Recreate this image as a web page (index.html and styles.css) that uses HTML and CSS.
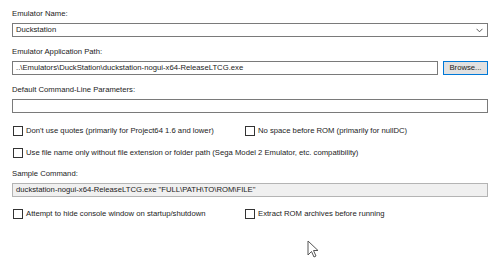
FILE: index.html
```html
<!DOCTYPE html>
<html lang="en">
<head>
  <meta charset="UTF-8">
  <title>Emulator Settings</title>
  <link rel="stylesheet" href="styles.css">
</head>
<body>

  <div class="form">
    <div class="label">Emulator Name:</div>
    <div class="field select">
      <span>Duckstation</span>
      <svg class="chevron" width="7" height="5" viewBox="0 0 7 5"><path d="M0.5 0.8 L3.5 3.8 L6.5 0.8" fill="none" stroke="#444" stroke-width="0.9"/></svg>
    </div>

    <div class="label">Emulator Application Path:</div>
    <div class="path-row">
      <div class="field grow">..\Emulators\DuckStation\duckstation-nogui-x64-ReleaseLTCG.exe</div>
      <button class="browse">Browse...</button>
    </div>

    <div class="label">Default Command-Line Parameters:</div>
    <div class="field"></div>

    <div class="checks first">
      <label class="check"><input type="checkbox"> Don't use quotes (primarily for Project64 1.6 and lower)</label>
      <label class="check"><input type="checkbox"> No space before ROM (primarily for nullDC)</label>
    </div>
    <div class="checks single">
      <label class="check"><input type="checkbox"> Use file name only without file extension or folder path (Sega Model 2 Emulator, etc. compatibility)</label>
    </div>

    <div class="label">Sample Command:</div>
    <div class="field readonly">duckstation-nogui-x64-ReleaseLTCG.exe "FULL\PATH\TO\ROM\FILE"</div>

    <div class="checks last">
      <label class="check"><input type="checkbox"> Attempt to hide console window on startup/shutdown</label>
      <label class="check"><input type="checkbox"> Extract ROM archives before running</label>
    </div>
  </div>

  <svg class="cursor" width="12" height="19" viewBox="0 0 12 19">
    <path d="M1 1 L1 15 L4.5 11.5 L7 17 L9 16 L6.5 10.5 L11 10.5 Z" fill="#fff" stroke="#555" stroke-width="1"/>
  </svg>

</body>
</html>
```

FILE: styles.css
```css
body {
  margin: 0;
  background: #fff;
  font-family: "Liberation Sans", Arial, sans-serif;
  font-size: 7.7px;
  color: #1b1b1b;
  position: relative;
  height: 265px;
  overflow: hidden;
}

.form {
  display: flex;
  flex-direction: column;
  padding: 9px 12px 0 12px;
}

.label {
  height: 10px;
  line-height: 10px;
  margin-bottom: 4px;
}

.field {
  box-sizing: border-box;
  height: 14px;
  border: 1px solid #7a7a7a;
  background: #fff;
  padding: 0 3px;
  line-height: 12px;
  margin-bottom: 10px;
  white-space: nowrap;
}

.select {
  display: flex;
  align-items: center;
  justify-content: space-between;
}

.chevron {
  margin-right: 1px;
}

.path-row {
  display: flex;
  gap: 5px;
}

.grow {
  flex: 1;
}

.browse {
  box-sizing: border-box;
  width: 45px;
  height: 14px;
  padding: 0;
  border: 1px solid #0078d7;
  background: #e1e1e1;
  font: inherit;
  color: #1b1b1b;
  line-height: 12px;
}

.readonly {
  background: #f0f0f0;
  border-color: #b4b4b4;
}

.checks {
  display: grid;
  grid-template-columns: 232px auto;
  height: 10px;
  margin-bottom: 12px;
  padding-left: 1px;
}

.checks.first {
  margin-top: 3px;
}

.checks.single {
  grid-template-columns: auto;
  margin-bottom: 11px;
}

.checks.last {
  margin-top: 2px;
}

.check {
  display: flex;
  align-items: center;
  gap: 3px;
  white-space: nowrap;
  line-height: 10px;
}

.check input {
  appearance: none;
  flex-shrink: 0;
  box-sizing: border-box;
  width: 10px;
  height: 10px;
  margin: 0;
  border: 1px solid #333;
  background: #fff;
}

.cursor {
  position: absolute;
  left: 307px;
  top: 240px;
}
```
